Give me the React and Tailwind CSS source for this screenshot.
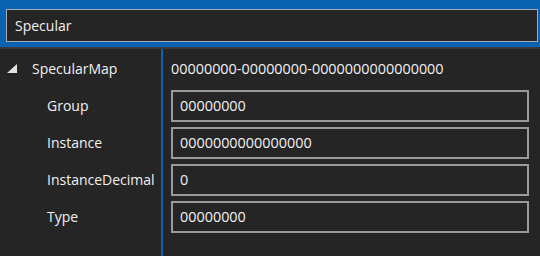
import React from 'react';

const rows = [
  { label: 'Group', value: '00000000' },
  { label: 'Instance', value: '0000000000000000' },
  { label: 'InstanceDecimal', value: '0' },
  { label: 'Type', value: '00000000' },
];

const Triangle = () => (
  <svg width="11" height="9" viewBox="0 0 11 9" className="shrink-0">
    <polygon points="10,0 10,9 0,9" fill="#e2e2e2" />
  </svg>
);

export default function App() {
  return (
    <div
      className="w-[540px] h-[256px] bg-[#252526] text-[#f1f1f1] text-[14px] overflow-hidden"
      style={{ fontFamily: '"Open Sans", "Noto Sans", sans-serif' }}
    >
      {/* search header */}
      <div className="bg-[#0a63b2] pt-[9px] pb-[5px] pl-[6px] pr-[2px] border-b-2 border-[#3a3a3c]">
        <div className="h-[33px] border border-[#a3aab3] bg-[#252526] flex items-center pl-[8px]">
          Specular
        </div>
      </div>

      {/* property grid */}
      <div className="flex h-[207px]">
        <div className="w-[161px] shrink-0 pt-[1px]">
          <div className="h-[37px] flex items-center pl-[7px] gap-[14px]">
            <Triangle />
            <span>SpecularMap</span>
          </div>
          {rows.map((r) => (
            <div key={r.label} className="h-[37px] flex items-center pl-[47px]">
              {r.label}
            </div>
          ))}
        </div>
        <div className="w-[2px] bg-[#0a63b2] shrink-0" />
        <div className="flex-1 pt-[1px] pl-[8px] text-[14.4px]">
          <div className="h-[37px] flex items-center">
            00000000-00000000-0000000000000000
          </div>
          {rows.map((r) => (
            <div key={r.label} className="h-[37px] flex items-center">
              <div className="w-[358px] h-[32px] border-2 border-[#999999] flex items-center pl-[7px]">
                {r.value}
              </div>
            </div>
          ))}
        </div>
      </div>
    </div>
  );
}
